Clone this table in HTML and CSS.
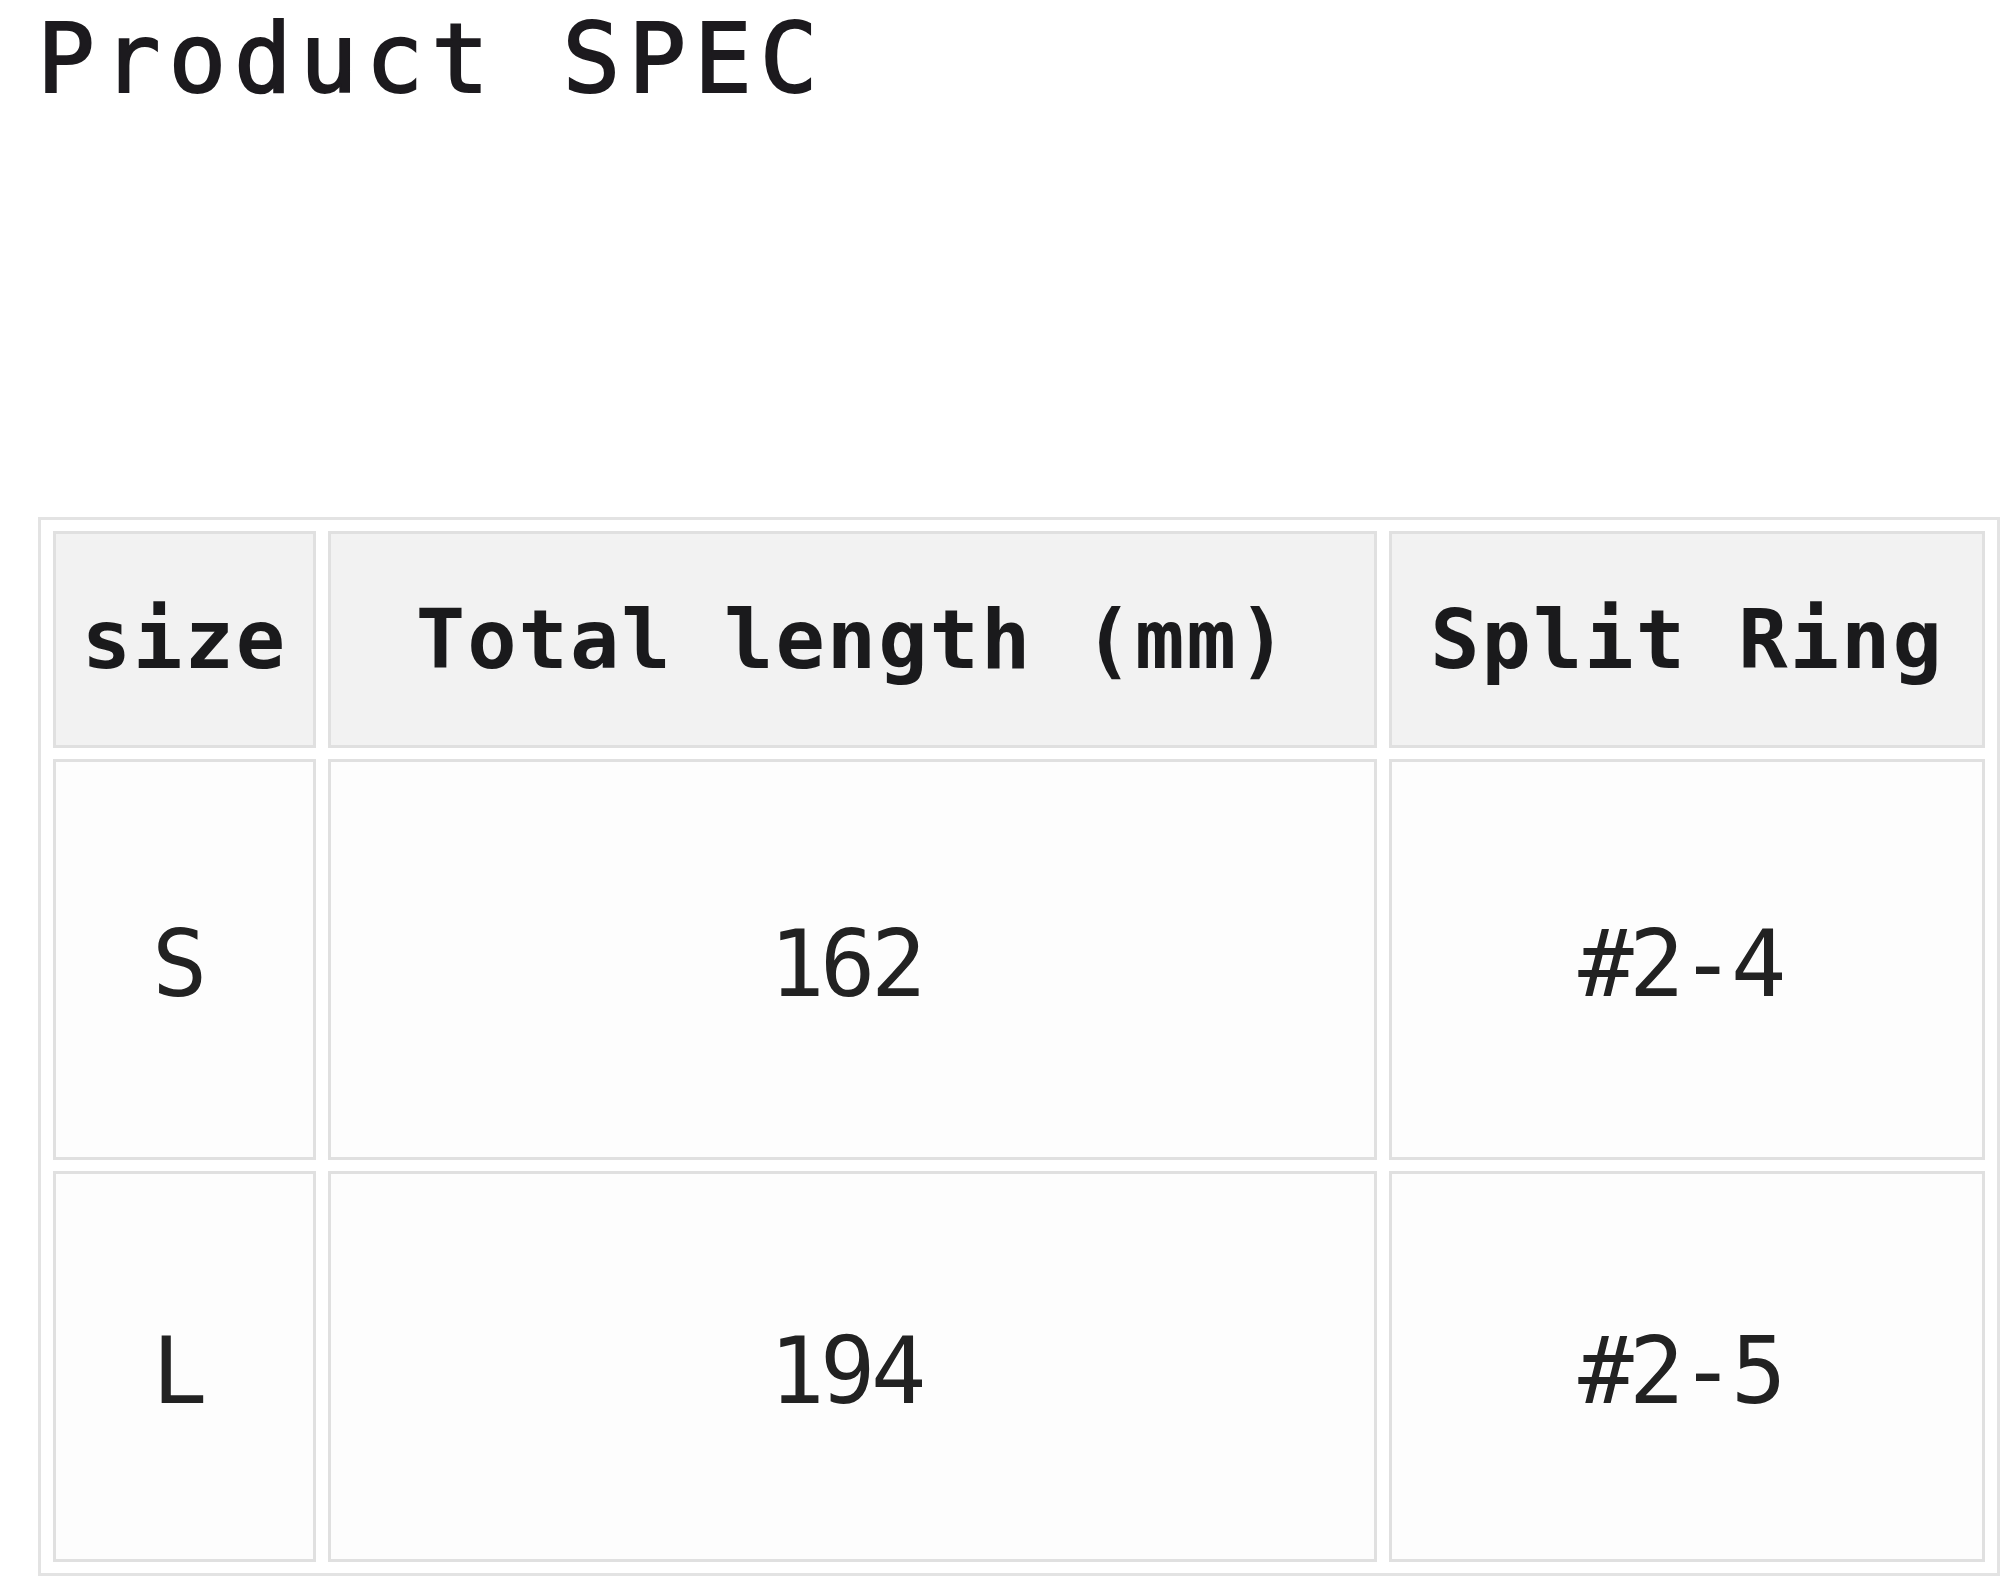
FILE: index.html
```html
<!DOCTYPE html>
<html lang="en">
<head>
<meta charset="utf-8">
<title>Product SPEC</title>
<link rel="stylesheet" href="styles.css">
</head>
<body>
<div class="page">
  <h1 class="title">Product SPEC</h1>
  <table class="spec">
    <thead>
      <tr class="head-row">
        <th class="c-size">size</th>
        <th class="c-len">Total length (mm)</th>
        <th class="c-ring">Split Ring</th>
      </tr>
    </thead>
    <tbody>
      <tr class="row-1">
        <td>S</td>
        <td>162</td>
        <td>#2-4</td>
      </tr>
      <tr class="row-2">
        <td>L</td>
        <td>194</td>
        <td>#2-5</td>
      </tr>
    </tbody>
  </table>
</div>
</body>
</html>
```
FILE: styles.css
```css
html, body {
  margin: 0;
  padding: 0;
  background: #ffffff;
  overflow: hidden;
}

.page {
  width: 2000px;
  height: 1582px;
  font-family: "DejaVu Sans Mono", "Liberation Mono", monospace;
  color: #1c1a1e;
}

.title {
  margin: 0;
  padding: 2px 0 0 37px;
  height: 515px;
  font-size: 96px;
  line-height: 114px;
  font-weight: 400;
  letter-spacing: 7.9px;
  -webkit-text-stroke: 2px #1c1a1e;
  color: #1c1a1e;
}

.spec {
  width: 1962px;
  margin-left: 38px;
  border: 3px solid #e3e3e3;
  border-spacing: 12px 11px;
  table-layout: fixed;
}

.spec th,
.spec td {
  padding: 0;
  border: 3px solid #e0e0e0;
  text-align: center;
  vertical-align: middle;
}

.spec th {
  background: #f2f2f2;
  font-size: 82px;
  font-weight: 700;
  letter-spacing: 2px;
  color: #1a1a1c;
}

.spec td {
  padding: 10px 14px 0 0;
  background: #fdfdfd;
  font-size: 92px;
  font-weight: 400;
  letter-spacing: -4.5px;
  color: #222222;
}

.c-size { width: 257px; }
.c-len { width: 1043px; }
.c-ring { width: 590px; }

.head-row th { height: 211px; }
.row-1 td { height: 385px; }
.row-2 td { height: 375px; }
```
